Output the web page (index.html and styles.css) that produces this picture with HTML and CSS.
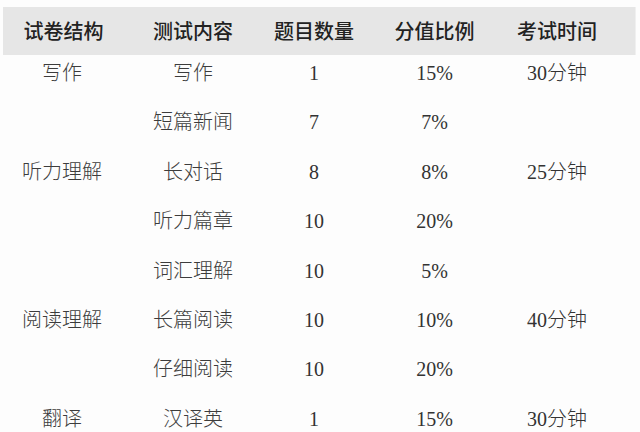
FILE: index.html
```html
<!DOCTYPE html>
<html lang="zh">
<head>
<meta charset="utf-8">
<link rel="stylesheet" href="styles.css">
</head>
<body>
<div class="sheet">
  <div class="head">
    <div>试卷结构</div><div>测试内容</div><div>题目数量</div><div>分值比例</div><div>考试时间</div>
  </div>
  <div class="body">
    <div>写作</div><div>写作</div><div class="num">1</div><div class="num">15%</div><div class="num">30分钟</div>
    <div></div><div>短篇新闻</div><div class="num">7</div><div class="num">7%</div><div></div>
    <div>听力理解</div><div>长对话</div><div class="num">8</div><div class="num">8%</div><div class="num">25分钟</div>
    <div></div><div>听力篇章</div><div class="num">10</div><div class="num">20%</div><div></div>
    <div></div><div>词汇理解</div><div class="num">10</div><div class="num">5%</div><div></div>
    <div>阅读理解</div><div>长篇阅读</div><div class="num">10</div><div class="num">10%</div><div class="num">40分钟</div>
    <div></div><div>仔细阅读</div><div class="num">10</div><div class="num">20%</div><div></div>
    <div>翻译</div><div>汉译英</div><div class="num">1</div><div class="num">15%</div><div class="num">30分钟</div>
  </div>
</div>
</body>
</html>
```
FILE: styles.css
```css
html, body {
  margin: 0;
  padding: 0;
  background: #fdfdfd;
  overflow: hidden;
}
.sheet {
  width: 640px;
  height: 432px;
  padding-top: 7px;
  box-sizing: border-box;
  overflow: hidden;
}
.head {
  display: grid;
  grid-template-columns: 121px 138px 104px 137px 108px;
  margin-left: 3px;
  width: 632px;
  height: 48px;
  background: #e6e6e6;
  border-right: 1px solid #f0f0f0;
  align-items: center;
  font-family: "Noto Sans CJK SC", sans-serif;
  font-weight: 500;
  font-size: 20px;
  color: #222;
  line-height: 48px;
}
.head > div {
  text-align: center;
}
.body {
  display: grid;
  grid-template-columns: 124px 138px 104px 137px 108px;
  grid-auto-rows: 49.4px;
  align-items: start;
  font-family: "Liberation Serif", "Noto Sans CJK SC", serif;
  font-weight: 300;
  font-size: 20px;
  line-height: 36px;
  color: #3c3c3c;
}
.body > div {
  text-align: center;
}
.num {
  color: #333;
}
```
